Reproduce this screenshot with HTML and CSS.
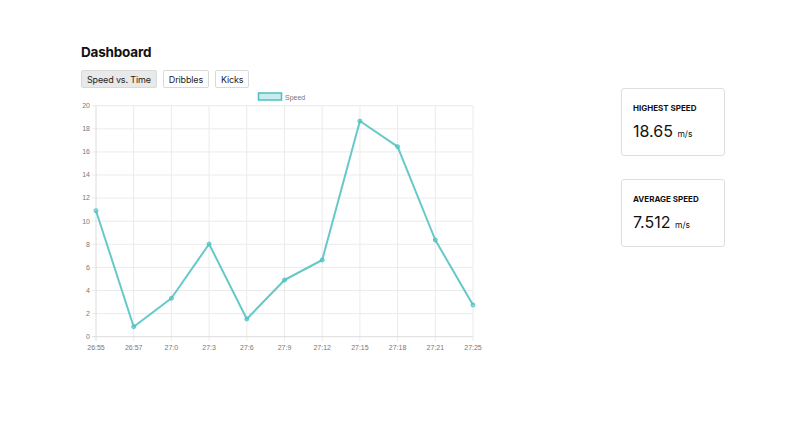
FILE: index.html
```html
<!DOCTYPE html>
<html>
<head>
	<meta charset="utf-8">
	<title>Dashboard</title>
	<link rel="stylesheet" href="styles.css">
</head>
<body>
<div class="page">
	<div class="main">
		<h1 class="title">Dashboard</h1>
		<div class="tabs">
			<button class="tab active">Speed vs. Time</button>
			<button class="tab">Dribbles</button>
			<button class="tab">Kicks</button>
		</div>
		<svg class="chart" width="404" height="265" viewBox="0 0 404 265">
			<!-- legend -->
			<rect x="177.5" y="5" width="23" height="7" class="legend-box"/>
			<text x="204" y="11.5" class="legend-text">Speed</text>

			<!-- horizontal grid -->
			<g class="grid">
				<line x1="11" y1="17.7" x2="392" y2="17.7"/>
				<line x1="11" y1="40.8" x2="392" y2="40.8"/>
				<line x1="11" y1="63.9" x2="392" y2="63.9"/>
				<line x1="11" y1="87" x2="392" y2="87"/>
				<line x1="11" y1="110.1" x2="392" y2="110.1"/>
				<line x1="11" y1="133.2" x2="392" y2="133.2"/>
				<line x1="11" y1="156.3" x2="392" y2="156.3"/>
				<line x1="11" y1="179.4" x2="392" y2="179.4"/>
				<line x1="11" y1="202.5" x2="392" y2="202.5"/>
				<line x1="11" y1="225.6" x2="392" y2="225.6"/>
			</g>
			<!-- vertical grid -->
			<g class="grid">
				<line x1="52.7" y1="17.7" x2="52.7" y2="253"/>
				<line x1="90.4" y1="17.7" x2="90.4" y2="253"/>
				<line x1="128.1" y1="17.7" x2="128.1" y2="253"/>
				<line x1="165.8" y1="17.7" x2="165.8" y2="253"/>
				<line x1="203.5" y1="17.7" x2="203.5" y2="253"/>
				<line x1="241.2" y1="17.7" x2="241.2" y2="253"/>
				<line x1="278.9" y1="17.7" x2="278.9" y2="253"/>
				<line x1="316.6" y1="17.7" x2="316.6" y2="253"/>
				<line x1="354.3" y1="17.7" x2="354.3" y2="253"/>
				<line x1="392" y1="17.7" x2="392" y2="253"/>
			</g>
			<g class="axis">
				<line x1="15" y1="17.7" x2="15" y2="253"/>
				<line x1="11" y1="248.7" x2="392" y2="248.7"/>
			</g>

			<!-- y labels -->
			<g class="ylabels">
				<text x="9" y="20">20</text>
				<text x="9" y="43.1">18</text>
				<text x="9" y="66.2">16</text>
				<text x="9" y="89.3">14</text>
				<text x="9" y="112.4">12</text>
				<text x="9" y="135.5">10</text>
				<text x="9" y="158.6">8</text>
				<text x="9" y="181.7">6</text>
				<text x="9" y="204.8">4</text>
				<text x="9" y="227.9">2</text>
				<text x="9" y="251">0</text>
			</g>
			<!-- x labels -->
			<g class="xlabels">
				<text x="15" y="262">26:55</text>
				<text x="52.7" y="262">26:57</text>
				<text x="90.4" y="262">27:0</text>
				<text x="128.1" y="262">27:3</text>
				<text x="165.8" y="262">27:6</text>
				<text x="203.5" y="262">27:9</text>
				<text x="241.2" y="262">27:12</text>
				<text x="278.9" y="262">27:15</text>
				<text x="316.6" y="262">27:18</text>
				<text x="354.3" y="262">27:21</text>
				<text x="392" y="262">27:25</text>
			</g>

			<!-- data -->
			<polyline class="line" points="15,122.7 52.7,238.7 90.4,210.3 128.1,156 165.8,231 203.5,192 241.2,172 278.9,33 316.6,58.7 354.3,152 392,217"/>
			<g class="dots">
				<circle cx="15" cy="122.7" r="2"/>
				<circle cx="52.7" cy="238.7" r="2"/>
				<circle cx="90.4" cy="210.3" r="2"/>
				<circle cx="128.1" cy="156" r="2"/>
				<circle cx="165.8" cy="231" r="2"/>
				<circle cx="203.5" cy="192" r="2"/>
				<circle cx="241.2" cy="172" r="2"/>
				<circle cx="278.9" cy="33" r="2"/>
				<circle cx="316.6" cy="58.7" r="2"/>
				<circle cx="354.3" cy="152" r="2"/>
				<circle cx="392" cy="217" r="2"/>
			</g>
		</svg>
	</div>
	<div class="side">
		<div class="card">
			<div class="card-title">HIGHEST SPEED</div>
			<div class="card-value">18.65 <span class="unit">m/s</span></div>
		</div>
		<div class="card">
			<div class="card-title">AVERAGE SPEED</div>
			<div class="card-value">7.512 <span class="unit">m/s</span></div>
		</div>
	</div>
</div>
</body>
</html>
```

FILE: styles.css
```css
body {
	margin: 0;
	padding: 0;
	background: #fff;
	font-family: Inter, "Noto Sans", sans-serif;
	color: #111;
}

.page {
	display: flex;
	justify-content: space-between;
	padding: 43px 81px 0 81px;
}

.main {
	width: 404px;
}

.title {
	margin: 0;
	font-size: 13.5px;
	font-weight: 700;
	letter-spacing: -0.2px;
	line-height: 18px;
}

.tabs {
	display: flex;
	gap: 6px;
	margin-top: 9px;
}

.tab {
	font-family: Inter, "Noto Sans", sans-serif;
	font-size: 9px;
	letter-spacing: -0.15px;
	color: #222;
	height: 18px;
	padding: 0 5px;
	background: #fff;
	border: 1px solid #d9d9d9;
	border-radius: 2px;
}

.tab.active {
	background: #e9e9e9;
}

.chart {
	display: block;
}

.chart text {
	font-family: "Liberation Sans", Arial, sans-serif;
	font-size: 7px;
	fill: #777;
}

.chart .ylabels text {
	text-anchor: end;
}

.chart .xlabels text {
	text-anchor: middle;
}

.legend-box {
	fill: rgba(75, 192, 192, 0.3);
	stroke: rgb(75, 192, 192);
	stroke-width: 1.5;
}

.grid line {
	stroke: #ebebeb;
	stroke-width: 1;
}

.axis line {
	stroke: #dcdcdc;
	stroke-width: 1;
}

.line {
	fill: none;
	stroke: rgba(75, 192, 192, 0.85);
	stroke-width: 2;
	stroke-linejoin: round;
}

.dots circle {
	fill: rgba(75, 192, 192, 0.5);
	stroke: rgba(75, 192, 192, 0.85);
	stroke-width: 1;
}

.side {
	width: 104px;
	padding-top: 45px;
}

.card {
	height: 66px;
	border: 1px solid #dedede;
	border-radius: 3px;
	padding: 0 11px;
	margin-bottom: 23px;
}

.card-title {
	margin-top: 14px;
	font-size: 8px;
	font-weight: 700;
	color: #111;
}

.card-value {
	margin-top: 8px;
	font-size: 16px;
	color: #111;
}

.unit {
	font-size: 8.5px;
}
```
